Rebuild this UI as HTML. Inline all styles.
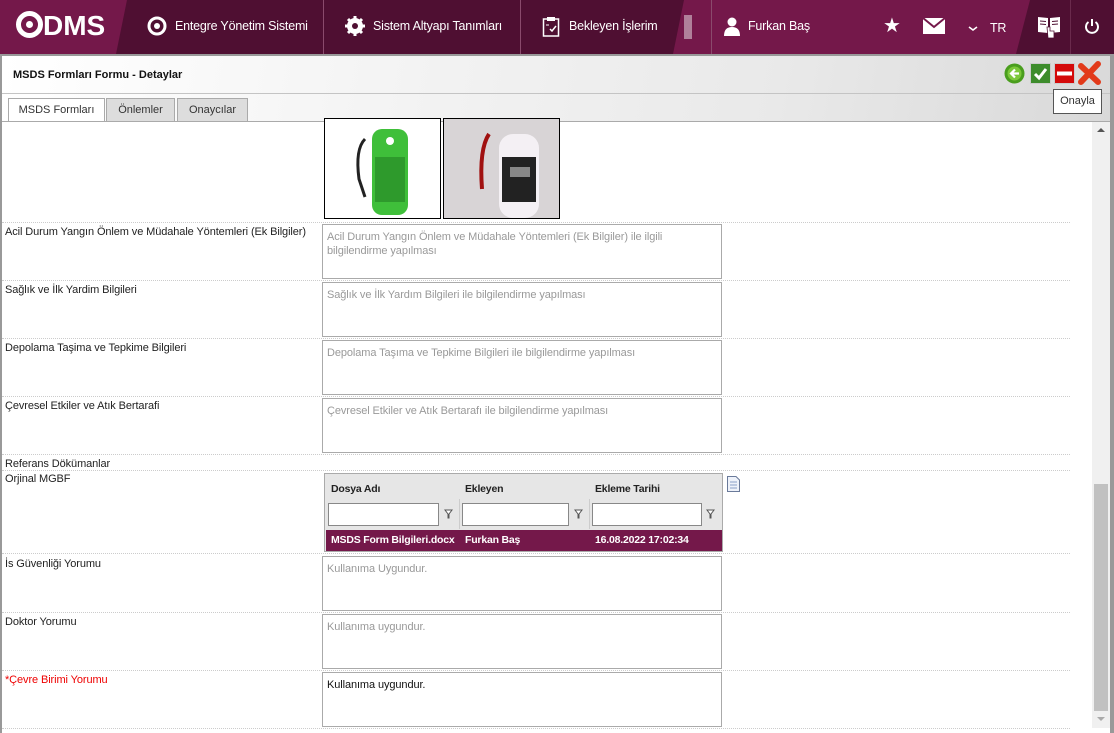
<!DOCTYPE html>
<html><head><meta charset="utf-8">
<style>
*{margin:0;padding:0;box-sizing:border-box}
body{width:1114px;height:733px;overflow:hidden;font-family:"Liberation Sans","DejaVu Sans",sans-serif;font-size:11px;color:#222;position:relative;background:#e6e6e6}
.abs{position:absolute}
.nav{left:0;top:0;width:1114px;height:54px;background:#74184a;overflow:hidden}
.nt{color:#fff;font-size:12.5px;top:19px;position:absolute;letter-spacing:-0.2px}
.vd{position:absolute;top:0;width:1px;height:54px;background:#8a4a6c}
.lbl{position:absolute;left:5px;font-size:11px;color:#222;letter-spacing:-0.1px}
.ta{position:absolute;left:322px;width:400px;height:55px;border:1px solid #aaa;background:#fff;padding:5px 4px;color:#999;font-size:11px;line-height:14px;letter-spacing:-0.1px}
.sep{position:absolute;left:2px;width:1068px;border-top:1px dotted #ccc;height:0}
.tab{position:absolute;top:98px;height:24px;border:1px solid #aaa;background:#ddd;font-size:11px;text-align:center;line-height:22px;color:#333}
.gb{font-weight:bold;font-size:10.5px;letter-spacing:-0.2px}
</style></head><body>
<div class="abs nav">
  <svg class="abs" style="left:0;top:0" width="1114" height="54">
    <polygon points="127,0 684,0 673,54 116,54" fill="#4f0f32"/>
    <polygon points="1030,0 1114,0 1114,54 1016,54" fill="#4f0f32"/>
  </svg>
  <div class="vd" style="left:323px"></div>
  <div class="vd" style="left:520px"></div>
  <div class="vd" style="left:711px"></div>
  <div class="vd" style="left:1070px;background:#6a2a4c"></div>
  <div class="abs" style="left:16px;top:10px;color:#fff;font-weight:bold;font-size:28px;letter-spacing:0px;font-family:'Liberation Sans',sans-serif">
    <span style="display:inline-block;width:27px;height:27px;border:5px solid #fff;border-radius:50%;vertical-align:-3px;position:relative"><span style="position:absolute;left:5px;top:5px;width:7px;height:7px;background:#fff;border-radius:50%"></span></span>DMS</div>
  <svg class="abs" style="left:147px;top:16px" width="20" height="20"><circle cx="10" cy="10" r="8" fill="none" stroke="#fff" stroke-width="3"/><circle cx="10" cy="10" r="3" fill="#fff"/></svg>
  <div class="nt" style="left:175px">Entegre Yönetim Sistemi</div>
  <svg class="abs" style="left:345px;top:16px" width="20" height="20"><circle cx="10" cy="10" r="6" fill="none" stroke="#fff" stroke-width="4"/><g stroke="#fff" stroke-width="3"><line x1="10" y1="0" x2="10" y2="20"/><line x1="0" y1="10" x2="20" y2="10"/><line x1="3" y1="3" x2="17" y2="17"/><line x1="17" y1="3" x2="3" y2="17"/></g><circle cx="10" cy="10" r="3" fill="#4f0f32"/></svg>
  <div class="nt" style="left:373px">Sistem Altyapı Tanımları</div>
  <svg class="abs" style="left:542px;top:16px" width="18" height="21"><rect x="1.5" y="3" width="15" height="17" fill="none" stroke="#fff" stroke-width="1.5"/><rect x="5" y="1" width="8" height="4" fill="#fff"/><polyline points="8,13 10,15 14,10" fill="none" stroke="#fff" stroke-width="1.5"/><line x1="4" y1="9" x2="7" y2="9" stroke="#fff"/></svg>
  <div class="nt" style="left:569px">Bekleyen İşlerim</div>
  <div class="abs" style="left:684px;top:15px;width:8px;height:24px;background:#b0809a"></div>
  <svg class="abs" style="left:723px;top:17px" width="18" height="19"><circle cx="9" cy="5" r="4.5" fill="#fff"/><path d="M1 19 Q1 10 9 10 Q17 10 17 19Z" fill="#fff"/></svg>
  <div class="nt" style="left:748px">Furkan Baş</div>
  <div class="abs" style="left:883px;top:13px;color:#fff;font-size:20px">★</div>
  <svg class="abs" style="left:923px;top:18px" width="22" height="16"><rect width="22" height="16" fill="#fff"/><polyline points="0,0 11,9 22,0" fill="none" stroke="#74184a" stroke-width="2"/></svg>
  <svg class="abs" style="left:968px;top:26px" width="10" height="6"><polyline points="1,1 5,4 9,1" fill="none" stroke="#fff" stroke-width="1.6"/></svg>
  <div class="nt" style="left:990px;top:21px">TR</div>
  <svg class="abs" style="left:1037px;top:15px" width="24" height="24"><path d="M1 2 L11 3 L11 18 L1 17Z M13 3 L23 2 L23 17 L13 18Z" fill="#fff"/><g stroke="#4f0f32" stroke-width="1"><line x1="3" y1="6" x2="9" y2="6.5"/><line x1="3" y1="9" x2="9" y2="9.5"/><line x1="15" y1="6.5" x2="21" y2="6"/><line x1="15" y1="9.5" x2="21" y2="9"/></g><path d="M10 12 L13 12 L13 16 L17 16 L17 23 L11 23 Z" fill="#fff" stroke="#4f0f32" stroke-width="0.8"/></svg>
  <svg class="abs" style="left:1084px;top:18px" width="16" height="16"><path d="M4.5 4 A6 6 0 1 0 11.5 4" fill="none" stroke="#fff" stroke-width="2"/><line x1="8" y1="1" x2="8" y2="8" stroke="#fff" stroke-width="2"/></svg>
</div>
<div class="abs" style="left:0;top:54px;width:1114px;height:2px;background:#999"></div>
<div class="abs" style="left:0;top:56px;width:2px;height:677px;background:#999"></div>
<div class="abs" style="left:1110px;top:56px;width:4px;height:677px;background:#999"></div>
<div class="abs" style="left:2px;top:56px;width:1108px;height:66px;background:linear-gradient(100deg,#fff 0%,#f2f2f2 40%,#e9e9e9 70%,#d9d9d9 100%)"></div>
<div class="abs" style="left:13px;top:69px;font-weight:bold;font-size:11px;color:#111">MSDS Formları Formu - Detaylar</div>
<div class="abs" style="left:2px;top:93px;width:1108px;height:1px;background:#c4c4c4"></div>
<svg class="abs" style="left:1004px;top:63px" width="21" height="21"><circle cx="10.5" cy="10.5" r="10" fill="#4a9e1e"/><circle cx="10.5" cy="10.5" r="7" fill="#7cc83a"/><path d="M15 10.5 H8 M11 6.5 L7 10.5 L11 14.5" stroke="#fff" stroke-width="2.2" fill="none"/></svg>
<svg class="abs" style="left:1030px;top:63px" width="21" height="21"><rect x="0.5" y="0.5" width="20" height="20" fill="#3d8c2c" stroke="#ccc"/><polyline points="5,11 9,15 16,6" fill="none" stroke="#fff" stroke-width="3"/></svg>
<svg class="abs" style="left:1054px;top:63px" width="21" height="21"><rect x="0.5" y="0.5" width="20" height="20" fill="#d40a0a" stroke="#ccc"/><rect x="3" y="8.5" width="15" height="4" fill="#fff"/></svg>
<svg class="abs" style="left:1078px;top:61px" width="23" height="24"><path d="M3 5 L20 21 M20 3 L3 21" stroke="#e23a1a" stroke-width="6" stroke-linecap="round"/></svg>
<div class="abs" style="left:1053px;top:89px;width:49px;height:25px;background:#fff;border:1px solid #555;font-size:11px;line-height:23px;text-align:center;color:#333">Onayla</div>
<div class="tab" style="left:8px;width:97px;background:#fff;border-bottom-color:#fff;height:25px">MSDS Formları</div>
<div class="tab" style="left:106px;width:69px">Önlemler</div>
<div class="tab" style="left:177px;width:71px">Onaycılar</div>
<div class="abs" style="left:2px;top:121px;width:1108px;height:1px;background:#aaa"></div>
<div class="abs" style="left:2px;top:122px;width:1108px;height:611px;background:#fff"></div>
<div class="abs" style="left:324px;top:118px;width:117px;height:101px;border:1px solid #000;background:#fff">
  <svg width="115" height="99"><path d="M40 20 Q30 30 34 60 L40 78" stroke="#222" stroke-width="3" fill="none"/><rect x="47" y="10" width="36" height="86" rx="10" fill="#3fbf3a"/><rect x="50" y="38" width="30" height="45" fill="#2e9a2c"/><circle cx="65" cy="22" r="4" fill="#fff"/></svg>
</div>
<div class="abs" style="left:443px;top:118px;width:117px;height:101px;border:1px solid #000;background:#d8d4d6">
  <svg width="115" height="99"><path d="M45 15 Q35 30 38 70" stroke="#a01010" stroke-width="4" fill="none"/><rect x="55" y="15" width="40" height="84" rx="14" fill="#f4f0f4"/><rect x="58" y="38" width="34" height="45" fill="#222"/><rect x="66" y="48" width="20" height="10" fill="#888"/></svg>
</div>
<div class="sep" style="top:222px"></div>
<div class="lbl" style="top:226px">Acil Durum Yangın Önlem ve Müdahale Yöntemleri (Ek Bilgiler)</div>
<div class="ta" style="top:224px">Acil Durum Yangın Önlem ve Müdahale Yöntemleri (Ek Bilgiler) ile ilgili bilgilendirme yapılması</div>
<div class="sep" style="top:280px"></div>
<div class="lbl" style="top:284px">Sağlık ve İlk Yardim Bilgileri</div>
<div class="ta" style="top:282px">Sağlık ve İlk Yardım Bilgileri ile bilgilendirme yapılması</div>
<div class="sep" style="top:338px"></div>
<div class="lbl" style="top:342px">Depolama Taşima ve Tepkime Bilgileri</div>
<div class="ta" style="top:340px">Depolama Taşıma ve Tepkime Bilgileri ile bilgilendirme yapılması</div>
<div class="sep" style="top:396px"></div>
<div class="lbl" style="top:400px">Çevresel Etkiler ve Atık Bertarafi</div>
<div class="ta" style="top:398px">Çevresel Etkiler ve Atık Bertarafı ile bilgilendirme yapılması</div>
<div class="sep" style="top:454px"></div>
<div class="lbl" style="top:458px">Referans Dökümanlar</div>
<div class="sep" style="top:470px"></div>
<div class="lbl" style="top:473px">Orjinal MGBF</div>
<div class="abs" style="left:324px;top:473px;width:399px;height:79px;border:1px solid #aaa;background:#e6e6e6">
  <div class="abs gb" style="left:6px;top:9px">Dosya Adı</div>
  <div class="abs gb" style="left:140px;top:9px">Ekleyen</div>
  <div class="abs gb" style="left:270px;top:9px">Ekleme Tarihi</div>
  <div class="abs" style="left:134px;top:25px;width:1px;height:30px;background:#ccc"></div>
  <div class="abs" style="left:264px;top:25px;width:1px;height:30px;background:#ccc"></div>
  <div class="abs" style="left:3px;top:29px;width:111px;height:23px;background:#fff;border:1px solid #888"></div>
  <div class="abs" style="left:137px;top:29px;width:107px;height:23px;background:#fff;border:1px solid #888"></div>
  <div class="abs" style="left:267px;top:29px;width:110px;height:23px;background:#fff;border:1px solid #888"></div>
  <svg class="abs" style="left:119px;top:35px" width="9" height="10"><path d="M1 1 H8 L5 5 V9 H4 V5Z" fill="#fff" stroke="#555"/></svg>
  <svg class="abs" style="left:249px;top:35px" width="9" height="10"><path d="M1 1 H8 L5 5 V9 H4 V5Z" fill="#fff" stroke="#555"/></svg>
  <svg class="abs" style="left:381px;top:35px" width="9" height="10"><path d="M1 1 H8 L5 5 V9 H4 V5Z" fill="#fff" stroke="#555"/></svg>
  <div class="abs" style="left:1px;top:56px;width:396px;height:21px;background:#74184a;color:#fff;line-height:21px">
    <span class="abs gb" style="left:5px">MSDS Form Bilgileri.docx</span><span class="abs gb" style="left:139px">Furkan Baş</span><span class="abs gb" style="left:269px">16.08.2022 17:02:34</span>
  </div>
</div>
<svg class="abs" style="left:727px;top:476px" width="13" height="16"><path d="M0.5 0.5 H9 L12.5 4 V15.5 H0.5Z" fill="#eef2fa" stroke="#6a7a9a"/><g stroke="#8aa0c8"><line x1="3" y1="6" x2="10" y2="6"/><line x1="3" y1="9" x2="10" y2="9"/><line x1="3" y1="12" x2="10" y2="12"/></g></svg>
<div class="sep" style="top:553px"></div>
<div class="lbl" style="top:558px">İs Güvenliği Yorumu</div>
<div class="ta" style="top:556px">Kullanıma Uygundur.</div>
<div class="sep" style="top:612px"></div>
<div class="lbl" style="top:616px">Doktor Yorumu</div>
<div class="ta" style="top:614px">Kullanıma uygundur.</div>
<div class="sep" style="top:670px"></div>
<div class="lbl" style="top:674px;color:#e00">*Çevre Birimi Yorumu</div>
<div class="ta" style="top:672px;color:#111">Kullanıma uygundur.</div>
<div class="sep" style="top:728px"></div>
<div class="abs" style="left:1092px;top:122px;width:18px;height:606px;background:#f0f0f0"></div>
<div class="abs" style="left:1097px;top:128px;width:0;height:0;border-left:4px solid transparent;border-right:4px solid transparent;border-bottom:4px solid #555"></div>
<div class="abs" style="left:1094px;top:484px;width:14px;height:227px;background:#c1c1c1"></div>
<div class="abs" style="left:1097px;top:717px;width:0;height:0;border-left:4px solid transparent;border-right:4px solid transparent;border-top:4px solid #aaa"></div>
</body></html>
